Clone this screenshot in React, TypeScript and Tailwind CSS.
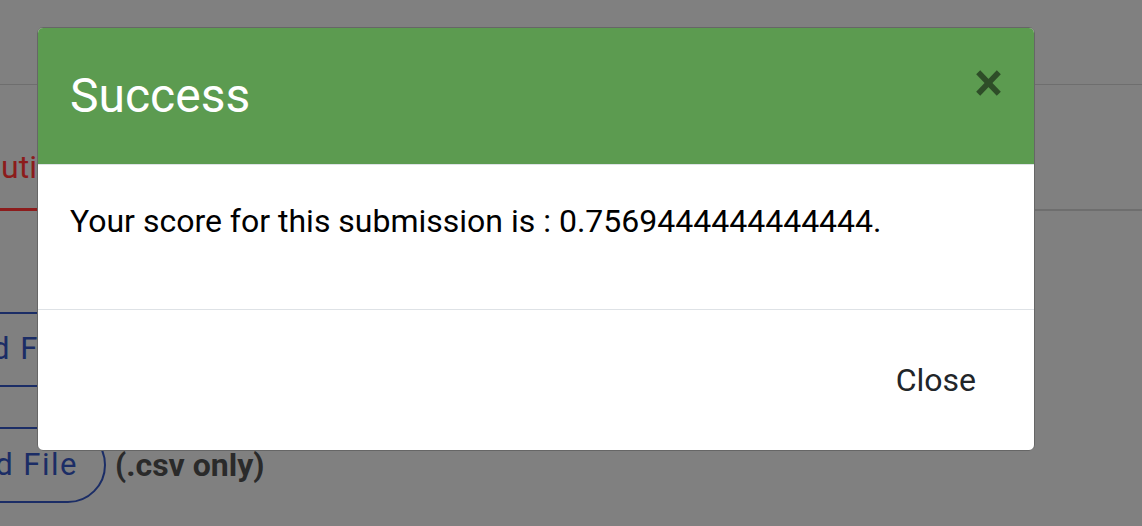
import React from "react";

function CloseIcon() {
  return (
    <svg width="25" height="26" viewBox="0 0 25 26" aria-hidden="true">
      <g stroke="#2e4d28" strokeWidth="5.6" strokeLinecap="butt">
        <line x1="2.2" y1="2.2" x2="22.8" y2="23.8" />
        <line x1="22.8" y1="2.2" x2="2.2" y2="23.8" />
      </g>
    </svg>
  );
}

export default function App() {
  return (
    <div
      className="relative h-[526px] w-[1142px] overflow-hidden bg-[#808080]"
      style={{ fontFamily: "Roboto, 'Liberation Sans', sans-serif" }}
    >
      {/* Background page (dimmed by backdrop) */}
      <div className="flex flex-col">
        <div className="h-[85px] border-b border-[#6e6e6e]" />
        <div className="flex h-[126px]">
          <div className="ml-[-44px] flex w-[200px] items-end border-b-[3px] border-[#8c1c1c]">
            <span className="mb-[17px] text-[32px] leading-[48px] text-[#8c1c1c]">Solution</span>
          </div>
          <div className="flex-1 border-b-2 border-[#6e6e6e]" />
        </div>
        <div className="mt-[101px] flex items-center">
          <div className="ml-[-191px] flex h-[75px] w-[700px] items-center rounded-r-[38px] border-2 border-[#1b2d66] pl-[50px] text-[31px] tracking-[1.5px] text-[#1b2d66]">
            Download File
          </div>
        </div>
        <div className="mt-[40px] flex items-center">
          <div className="ml-[-180px] flex h-[76px] w-[286px] items-center justify-end rounded-r-[38px] border-2 border-[#1b2d66] pr-[26px] text-[31px] tracking-[1.5px] text-[#1b2d66]">
            Upload File
          </div>
          <span className="ml-[9px] text-[32px] font-bold text-[#2a2a2a]">(.csv only)</span>
        </div>
      </div>

      {/* Modal */}
      <div className="absolute left-[37px] top-[27px] w-[998px] overflow-hidden rounded-[6px] border border-[#666666] bg-white">
        <div className="flex h-[137px] items-start justify-between border-b border-[#dee2e6] bg-[#5c9b50] p-[32px]">
          <h4 className="text-[48px] font-normal leading-[72px] text-white">Success</h4>
          <button className="mr-[1px] mt-[10px]">
            <CloseIcon />
          </button>
        </div>
        <div className="h-[145px] border-b border-[#dee2e6] p-[32px]">
          <p className="text-[32px] leading-[48px] text-black">
            Your score for this submission is : 0.7569444444444444.
          </p>
        </div>
        <div className="flex h-[140px] items-center justify-end px-[32px]">
          <button className="h-[76px] rounded-[8px] border-2 border-transparent px-[24px] text-[32px] leading-[48px] text-[#212529]">
            Close
          </button>
        </div>
      </div>
    </div>
  );
}
